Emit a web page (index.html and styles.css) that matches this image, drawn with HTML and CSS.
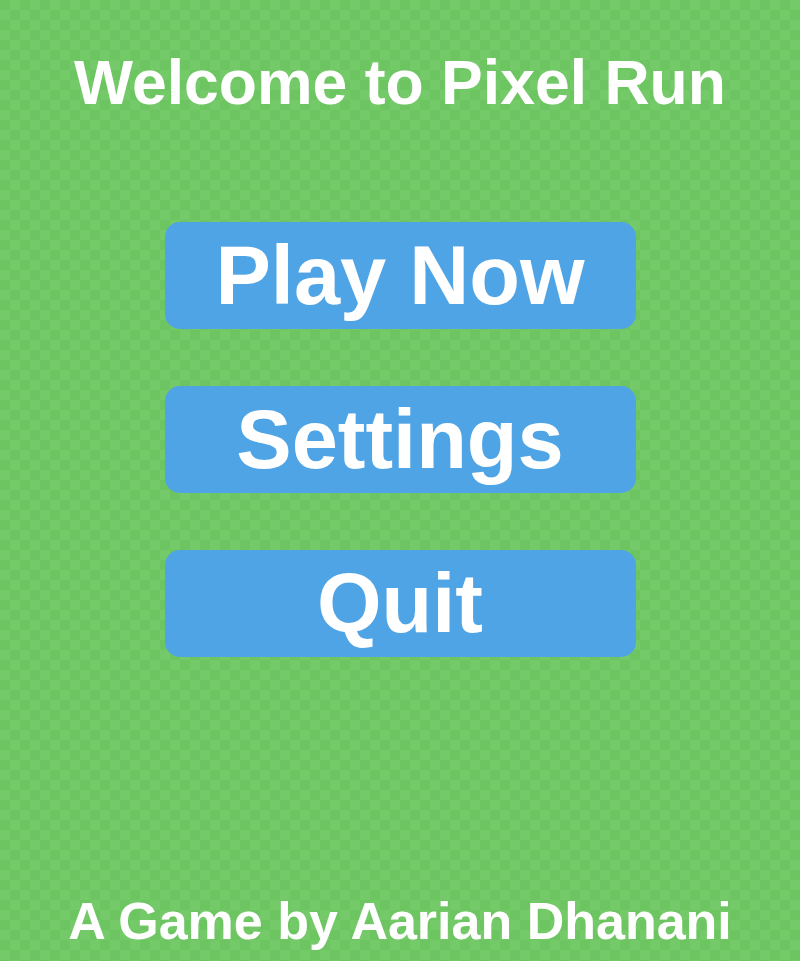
FILE: index.html
```html
<!DOCTYPE html>
<html>
<head>
<meta charset="utf-8">
<link rel="stylesheet" href="styles.css">
</head>
<body>
<div class="screen">
  <h1 class="title">Welcome to Pixel Run</h1>
  <div class="menu">
    <button class="btn">Play Now</button>
    <button class="btn">Settings</button>
    <button class="btn">Quit</button>
  </div>
  <div class="footer">A Game by Aarian Dhanani</div>
</div>
</body>
</html>
```
FILE: styles.css
```css
html, body {
  margin: 0;
  padding: 0;
}
body {
  background-color: #6dc562;
  background-image: conic-gradient(#74c968 25%, #6dc562 0 50%, #74c968 0 75%, #6dc562 0);
  background-size: 20px 20px;
  font-family: "Liberation Sans", Arial, sans-serif;
  color: #ffffff;
}
.screen {
  height: 961px;
  display: flex;
  flex-direction: column;
  align-items: center;
  box-sizing: border-box;
  padding-top: 51px;
  padding-bottom: 14px;
}
.title {
  margin: 0;
  font-size: 62.5px;
  line-height: 62px;
  font-weight: bold;
  white-space: nowrap;
}
.menu {
  margin-top: 109px;
  display: flex;
  flex-direction: column;
  gap: 57px;
}
.btn {
  width: 471px;
  height: 107px;
  border: none;
  border-radius: 15px;
  background: #4fa4e6;
  color: #ffffff;
  font-family: "Liberation Sans", Arial, sans-serif;
  font-weight: bold;
  font-size: 83px;
  line-height: 1;
  padding: 0;
  display: flex;
  align-items: center;
  justify-content: center;
}
.footer {
  margin-top: auto;
  font-size: 52px;
  line-height: 51px;
  font-weight: bold;
  white-space: nowrap;
}
```
